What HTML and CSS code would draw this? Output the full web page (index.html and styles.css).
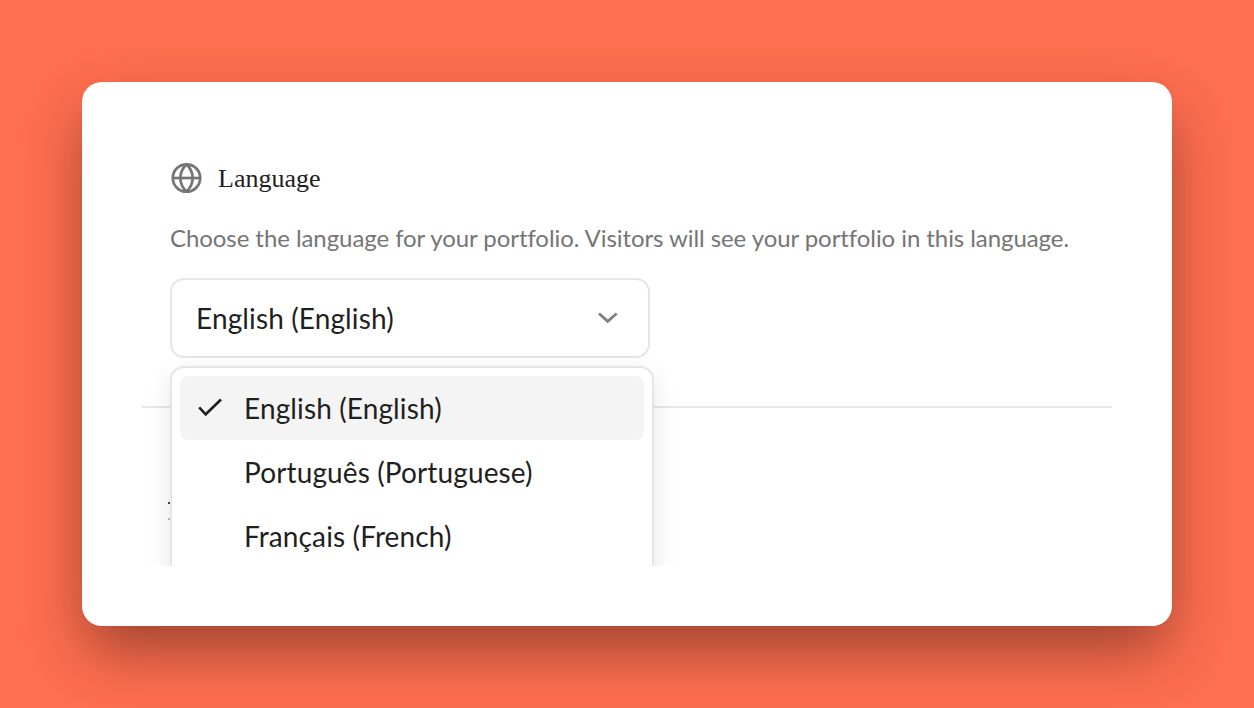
FILE: index.html

```html
<!DOCTYPE html>
<html lang="en">
<head>
  <meta charset="UTF-8">
  <meta name="viewport" content="width=device-width, initial-scale=1.0">
  <title>Language</title>
  <link rel="stylesheet" href="styles.css">
</head>
<body>
  <div class="card">
    <div class="settings">
      <section class="section">
        <div class="section-title">
          <svg class="globe" width="32" height="32" viewBox="0 0 32 32" fill="none" stroke="#757575" stroke-width="2.7">
            <circle cx="16.5" cy="16" r="13.7"/>
            <path d="M2.8 16h27.4"/>
            <path d="M16.5 2.3c-8.2 8.2-8.2 19.2 0 27.4M16.5 2.3c8.2 8.2 8.2 19.2 0 27.4"/>
          </svg>
          <h2>Language</h2>
        </div>
        <p class="hint">Choose the language for your portfolio. Visitors will see your portfolio in this language.</p>
        <div class="select-wrap">
          <div class="select">
            <span>English (English)</span>
            <svg width="20" height="12" viewBox="0 0 20 12" fill="none" stroke="#808080" stroke-width="2.8" stroke-linejoin="miter">
              <path d="M1 1.5l8.7 7.8 9-7.8"/>
            </svg>
          </div>
          <ul class="menu">
            <li class="option active">
              <svg class="check" width="24" height="20" viewBox="0 0 24 20" fill="none" stroke="#1f1f1f" stroke-width="2.6" stroke-linejoin="miter">
                <path d="M1.2 9.4l6.5 6.9L23 1.5"/>
              </svg>
              <span>English (English)</span>
            </li>
            <li class="option"><span>Português (Portuguese)</span></li>
            <li class="option"><span>Français (French)</span></li>
          </ul>
        </div>
      </section>
      <div class="next-section">
        <i class="speck"></i>
        <i class="speck faint"></i>
      </div>
    </div>
  </div>
</body>
</html>
```

FILE: styles.css

```css
* {
  box-sizing: border-box;
}
body {
  margin: 0;
  height: 708px;
  padding: 82px;
  overflow: hidden;
  background: #ff6f50;
  font-family: Lato, "Open Sans", sans-serif;
  color: #1f1f1f;
}
.card {
  width: 1090px;
  height: 544px;
  padding: 60px;
  background: #fff;
  border-radius: 20px;
  box-shadow: 0 28px 60px -4px rgba(60, 25, 15, 0.5);
}
.settings {
  height: 424px;
  overflow: hidden;
}
.section {
  height: 266px;
  padding: 20px 28px 0;
  border-bottom: 2px solid #e6e6e6;
}
.section-title {
  display: flex;
  align-items: center;
  gap: 16px;
  height: 32px;
}
.globe {
  display: block;
}
h2 {
  margin: 0;
  padding-top: 1px;
  font-family: "Liberation Serif", serif;
  font-size: 26px;
  font-weight: 400;
  line-height: 32px;
}
.hint {
  margin: 28px 0 0;
  font-size: 24px;
  letter-spacing: -0.07px;
  line-height: 32px;
  color: #757575;
  white-space: nowrap;
}
.select-wrap {
  position: relative;
  margin-top: 24px;
  width: 480px;
}
.select {
  display: flex;
  align-items: center;
  justify-content: space-between;
  height: 80px;
  padding: 0 30px 0 24px;
  border: 2px solid #e6e6e6;
  border-radius: 14px;
  font-size: 28px;
  letter-spacing: 0.12px;
}
.menu {
  position: absolute;
  top: 88px;
  left: 0;
  width: 484px;
  margin: 0;
  padding: 8px;
  list-style: none;
  background: #fff;
  border: 2px solid #e6e6e6;
  border-radius: 14px;
  box-shadow: 0 8px 24px rgba(0, 0, 0, 0.1);
}
.option {
  display: flex;
  align-items: center;
  height: 64px;
  padding-left: 64px;
  border-radius: 8px;
  font-size: 28px;
  letter-spacing: 0.12px;
  position: relative;
}
.option.active {
  background: #f4f4f4;
}
.check {
  position: absolute;
  left: 18px;
  top: 22px;
}
.next-section {
  padding: 94px 0 0 26px;
}
.speck {
  display: block;
  width: 2px;
  height: 2px;
  background: #444;
}
.speck.faint {
  margin-top: 14px;
  background: #bbb;
}
```
